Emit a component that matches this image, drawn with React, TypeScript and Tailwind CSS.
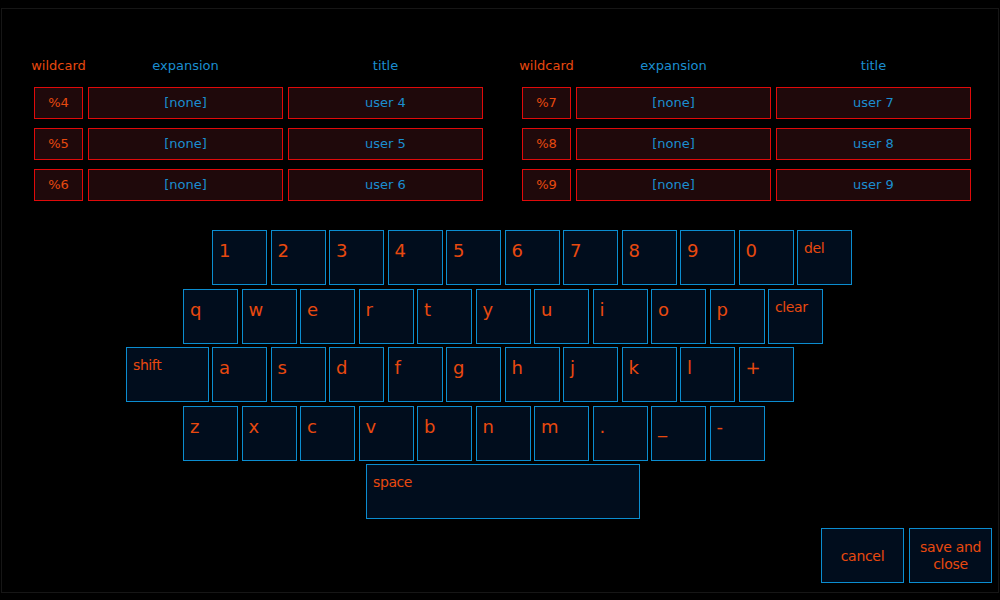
import React from "react";

const ORANGE = "text-[#e8490f]";

function Key({ label, w = "w-[55px]", small = false }: { label: string; w?: string; small?: boolean }) {
  return (
    <div
      className={`${w} h-[55px] shrink-0 border border-[#0b8dd0] bg-[#010d1d] ${ORANGE} pl-[6px] ${
        small ? "pt-[10px] text-[14px] tracking-[-0.4px]" : "pt-[11px] text-[18px]"
      } leading-none`}
    >
      {label}
    </div>
  );
}

function Row({ keys, ml, extra }: { keys: string[]; ml: string; extra?: React.ReactNode }) {
  return (
    <div className={`flex gap-[3.5px] ${ml}`}>
      {keys.map((k) => (
        <Key key={k} label={k} />
      ))}
      {extra}
    </div>
  );
}

function Table({ rows }: { rows: [string, string][] }) {
  const cell = "h-[32px] border border-[#e00a0a] bg-[#1f090b] flex items-center justify-center text-[13px]";
  return (
    <div className="w-[449px] flex flex-col">
      <div className="flex gap-[5px] h-[20px] items-center text-[13px] pt-[1px]">
        <div className={`w-[49px] text-center whitespace-nowrap flex justify-center ${ORANGE}`}>wildcard</div>
        <div className="w-[195px] text-center text-[#1b8ed0]">expansion</div>
        <div className="w-[195px] text-center text-[#1b8ed0]">title</div>
      </div>
      <div className="mt-[12px] flex flex-col gap-[9px]">
        {rows.map(([w, t]) => (
          <div key={w} className="flex gap-[5px]">
            <div className={`w-[49px] ${cell} ${ORANGE}`}>{w}</div>
            <div className={`w-[195px] ${cell} text-[#1b8ed0]`}>[none]</div>
            <div className={`w-[195px] ${cell} text-[#1b8ed0]`}>{t}</div>
          </div>
        ))}
      </div>
    </div>
  );
}

export default function App() {
  return (
    <div
      className="w-[1000px] h-[600px] bg-black overflow-hidden pt-[8px] pl-[1px]"
      style={{ fontFamily: '"DejaVu Sans", Verdana, sans-serif' }}
    >
      <div className="w-[998px] h-[585px] border border-[#161616] flex flex-col">
        <div className="flex gap-[39px] pl-[32px] pt-[46px]">
          <Table rows={[["%4", "user 4"], ["%5", "user 5"], ["%6", "user 6"]]} />
          <Table rows={[["%7", "user 7"], ["%8", "user 8"], ["%9", "user 9"]]} />
        </div>
        <div className="mt-[29px] flex flex-col gap-[3.5px]">
          <Row
            ml="ml-[210px]"
            keys={["1", "2", "3", "4", "5", "6", "7", "8", "9", "0"]}
            extra={<Key label="del" small />}
          />
          <Row
            ml="ml-[181px]"
            keys={["q", "w", "e", "r", "t", "y", "u", "i", "o", "p"]}
            extra={<Key label="clear" small />}
          />
          <div className="flex gap-[3.5px] ml-[124px]">
            <Key label="shift" w="w-[82.5px]" small />
            {["a", "s", "d", "f", "g", "h", "j", "k", "l", "+"].map((k) => (
              <Key key={k} label={k} />
            ))}
          </div>
          <Row ml="ml-[181px]" keys={["z", "x", "c", "v", "b", "n", "m", ".", "_", "-"]} />
          <div className="flex ml-[364px]">
            <Key label="space" w="w-[274px]" small />
          </div>
        </div>
        <div className="mt-[9px] flex justify-end gap-[5px] pr-[6px]">
          <div className={`w-[83px] h-[55px] border border-[#0b8dd0] bg-[#010d1d] ${ORANGE} flex items-center justify-center text-[14px] tracking-[-0.3px] pt-[2px]`}>
            cancel
          </div>
          <div className={`w-[83px] h-[55px] border border-[#0b8dd0] bg-[#010d1d] ${ORANGE} flex items-center justify-center text-center text-[14px] leading-[17px] tracking-[-0.3px]`}>
            save and
            <br />
            close
          </div>
        </div>
      </div>
    </div>
  );
}
